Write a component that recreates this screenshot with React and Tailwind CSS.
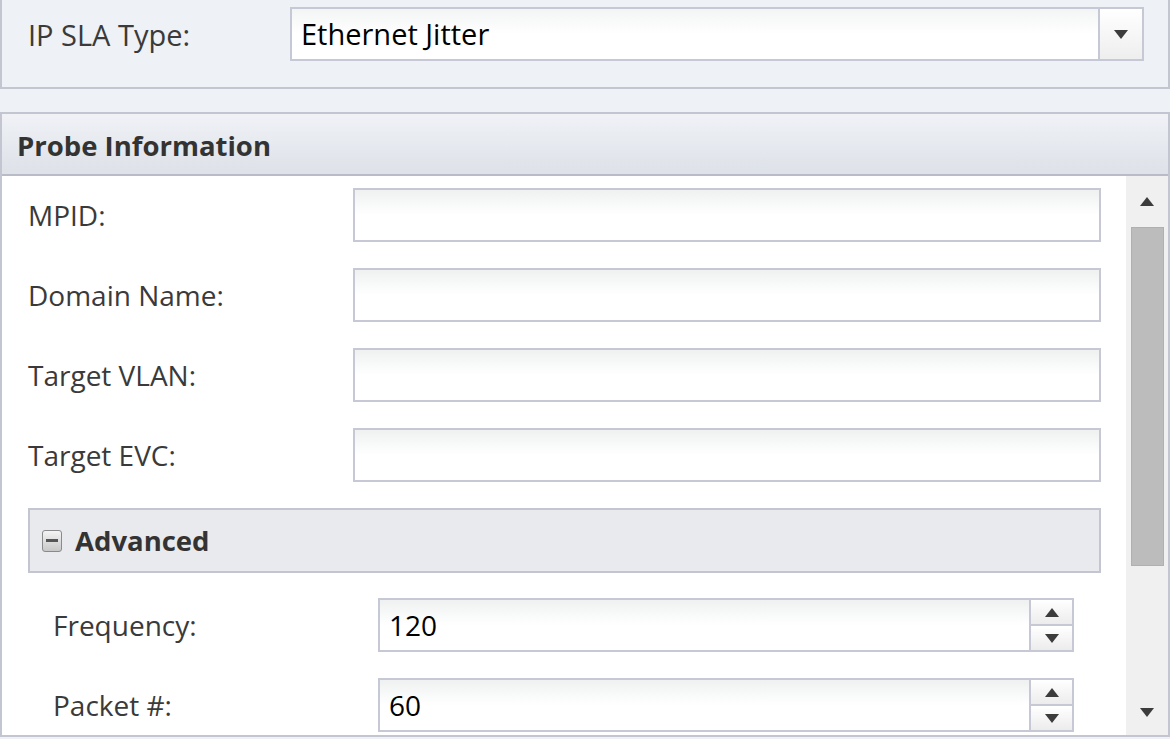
const FIELDS = ["MPID:", "Domain Name:", "Target VLAN:", "Target EVC:"];
const ADVANCED = [
  ["Frequency:", "120"],
  ["Packet #:", "60"],
];

function Triangle({ up, className = "" }) {
  return (
    <svg width="14" height="9" viewBox="0 0 14 9" className={className}>
      <path d={up ? "M7 0 L14 9 L0 9 Z" : "M0 0 L14 0 L7 9 Z"} fill="#3c3c3c" />
    </svg>
  );
}

function TextBox({ value, className = "" }) {
  return (
    <div
      className={
        "h-[54px] border-2 border-[#c6c8d6] bg-gradient-to-b from-[#eff1f1] via-white to-white flex items-center px-[9px] text-[29px] text-black " +
        className
      }
    >
      {value}
    </div>
  );
}

function Spinner({ value }) {
  return (
    <div className="ml-[31px] w-[696px] h-[54px] border-2 border-[#c6c8d6] flex bg-gradient-to-b from-[#eff1f1] via-white to-white">
      <div className="flex-1 flex items-center px-[9px] text-[28px] text-black">{value}</div>
      <div className="w-[43px] flex flex-col border-l-2 border-[#c6c8d6]">
        <div className="flex-1 flex items-center justify-center border-b-2 border-[#c6c8d6] bg-gradient-to-b from-white to-[#ececec]">
          <Triangle up />
        </div>
        <div className="flex-1 flex items-center justify-center bg-gradient-to-b from-white to-[#ececec]">
          <Triangle />
        </div>
      </div>
    </div>
  );
}

export default function App() {
  return (
    <div
      className="w-[1170px] h-[739px] overflow-hidden bg-[#eef1f5] text-[#3a3a3a]"
      style={{ fontFamily: '"Open Sans", "Noto Sans", sans-serif' }}
    >
      {/* type selector */}
      <div className="h-[89px] border-x-2 border-b-2 border-[#c3c6d1] pt-[7px] pl-[26px] pr-[24px] flex items-start">
        <div className="w-[262px] h-[54px] flex items-center pt-[2px] text-[29px]">IP SLA Type:</div>
        <div className="flex-1 h-[54px] border-2 border-[#c6c8d6] flex bg-gradient-to-b from-[#f3f4f4] via-white to-white">
          <div className="flex-1 flex items-center pl-[9px] text-[29px] text-black">Ethernet Jitter</div>
          <div className="w-[44px] border-l-2 border-[#c6c8d6] flex items-center justify-center bg-gradient-to-b from-white to-[#eeeeee]">
            <Triangle />
          </div>
        </div>
      </div>

      <div className="h-[23px]" />

      {/* probe info */}
      <div className="border-2 border-[#c3c6d1] h-[625px] flex flex-col">
        <div className="h-[62px] border-b-2 border-[#b9bcc7] bg-gradient-to-b from-[#f0f2f6] to-[#dde1e8] flex items-center pl-[15px] pt-[4px] text-[27.5px] font-bold text-[#333]">
          Probe Information
        </div>
        <div className="flex-1 flex bg-white overflow-hidden">
          <div className="flex-1 pt-[12px] pl-[26px] pr-[25px]">
            {FIELDS.map((label) => (
              <div key={label} className="flex items-center mb-[26px]">
                <div className="w-[325px] text-[28px]">{label}</div>
                <TextBox value="" className="flex-1" />
              </div>
            ))}
            <div className="h-[65px] border-2 border-[#c3c6d1] bg-[#e8eaed] flex items-center pl-[12px] gap-[13px] text-[27.5px] font-bold text-[#333]">
              <div className="w-[20px] h-[22px] rounded-[3px] border border-[#8a8a8a] bg-gradient-to-b from-[#f4f4f4] to-[#c8c8c8] flex items-center justify-center">
                <div className="w-[12px] h-[3px] bg-[#555]" />
              </div>
              Advanced
            </div>
            <div className="pl-[25px] pt-[25px]">
              {ADVANCED.map(([label, value]) => (
                <div key={label} className="flex items-center mb-[26px]">
                  <div className="w-[294px] text-[28px]">{label}</div>
                  <Spinner value={value} />
                </div>
              ))}
            </div>
          </div>
          <div className="w-[42px] bg-[#f0f0f0] flex flex-col items-center">
            <div className="h-[51px] flex items-center">
              <Triangle up />
            </div>
            <div className="w-[33px] h-[339px] bg-[#bcbcbc] border border-[#b0b0b0] ml-[1px]" />
            <div className="flex-1" />
            <div className="mb-[18px]">
              <Triangle />
            </div>
          </div>
        </div>
      </div>
    </div>
  );
}
